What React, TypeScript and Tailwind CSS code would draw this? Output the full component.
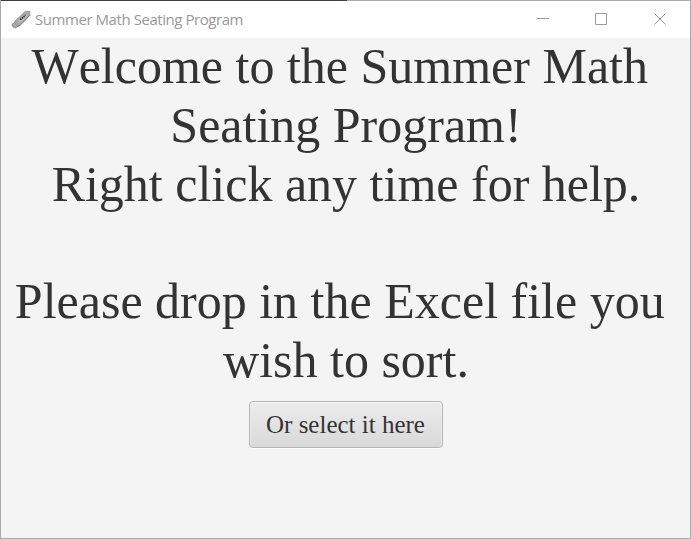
const lines: string[] = [
  "Welcome to the Summer Math\u00a0",
  "Seating Program!",
  "Right click any time for help.",
  "\u00a0",
  "Please drop in the Excel file you\u00a0",
  "wish to sort.",
];

const controls = [
  { name: "Minimize", d: "M0 5.5H12" },
  { name: "Maximize", d: "M.5.5H11.5V11.5H.5Z" },
  { name: "Close", d: "M.5.5 11.5 11.5M11.5.5.5 11.5" },
];

function UsbIcon() {
  return (
    <svg width="20" height="20" viewBox="0 0 20 20" className="shrink-0">
      <path d="M1 14.4 4 12 7.6 15.6 4.4 18.2 3.4 17.2 2.6 17.4 1.4 16Z" fill="#aaa" stroke="#777" strokeWidth=".8" />
      <path d="M4 11 14.4 1.2 18.8 1.4 19 5.2 8.6 15.8 6.6 16 4 13.2Z" fill="#a8a8a8" stroke="#959595" strokeWidth=".8" />
      <path d="M19 5.2 8.6 15.8 6.6 16" fill="none" stroke="#747474" strokeWidth=".8" />
      <path d="M7.2 10.8 14.6 3.6 16.6 5.4 9.4 12.8Z" fill="#c4c4c4" />
      <path d="M9.2 9.8 14.8 4.8" stroke="#333" strokeWidth="1.7" strokeDasharray="1.6 .6" fill="none" />
    </svg>
  );
}

function TitleBar() {
  return (
    <header className="flex h-[37px] shrink-0 items-center bg-white pl-[10px]">
      <UsbIcon />
      <span className="-mt-[2px] ml-[4px] w-[209px] whitespace-nowrap font-['Open_Sans',sans-serif] text-[15px] leading-[20px] tracking-[-0.44px] text-[#999]">
        Summer Math Seating Program
      </span>
      <div className="-mt-px mr-[1px] ml-auto flex h-full text-[#999]">
        {controls.map(({ name, d }) => (
          <button key={name} aria-label={name} className="flex w-[58.5px] items-center justify-center">
            <svg width="12" height="12" viewBox="0 0 12 12" fill="none" stroke="currentColor">
              <path d={d} />
            </svg>
          </button>
        ))}
      </div>
    </header>
  );
}

export default function App() {
  return (
    <div className="flex h-[539px] w-[691px] flex-col border border-[#aaa] bg-[#f4f4f4]">
      <div className="-mt-px h-px w-[346px] shrink-0 bg-[#423d47]" />
      <TitleBar />
      <main className="flex flex-col items-center font-['Liberation_Serif',serif] text-[#333]">
        <h1 className="-mt-[0.9px] pl-px text-center text-[50px] leading-[58.85px] [font-kerning:none]">
          {lines.map((line, i) => (
            <span key={i} className="block whitespace-nowrap">
              {line}
            </span>
          ))}
        </h1>
        <button className="mt-[10.8px] h-[47px] w-[194px] rounded-[4px] border border-[#b5b5b5] bg-linear-to-b from-[#ececec] to-[#d9d9d9] text-[25px] leading-[29px] shadow-[inset_0_1px_0_#f8f8f8,inset_1px_0_0_#ebebeb,inset_-1px_0_0_#ebebeb,0_1px_0_#fafafa]">
          Or select it here
        </button>
      </main>
    </div>
  );
}
